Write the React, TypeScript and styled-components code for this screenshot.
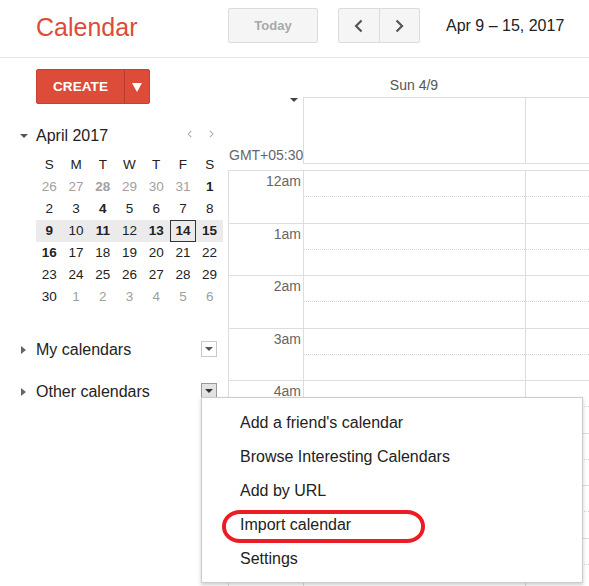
import React from 'react';
import styled, { createGlobalStyle } from 'styled-components';

const GlobalStyle = createGlobalStyle`
  html, body { margin: 0; padding: 0; background: #fff; }
  body { font-family: "Liberation Sans", Arial, sans-serif; color: #222; }
  * { box-sizing: border-box; }
  button { font-family: "Liberation Sans", Arial, sans-serif; cursor: default; }
`;

const Page = styled.div`
  position: relative;
  width: 589px;
  height: 586px;
  overflow: hidden;
  display: flex;
  flex-direction: column;
`;

/* ---------- header ---------- */
const Header = styled.header`
  flex: none;
  height: 58px;
  display: flex;
  align-items: flex-start;
  padding-top: 8px;
  border-bottom: 1px solid #e5e5e5;
`;

const Logo = styled.div`
  width: 228px;
  padding-left: 36px;
  margin-top: 2px;
  font-size: 25px;
  line-height: 35px;
  color: #dd4b39;
`;

const TodayButton = styled.button`
  width: 90px;
  height: 35px;
  padding: 0;
  background: #f5f5f5;
  border: 1px solid #dcdcdc;
  border-radius: 2px;
  font-size: 13px;
  font-weight: bold;
  color: #a9a9a9;
`;

const NavGroup = styled.div`
  display: flex;
  margin-left: 20px;
  width: 82px;
  height: 35px;
  border: 1px solid #dcdcdc;
  border-radius: 2px;
  background: #f5f5f5;
`;

const NavButton = styled.button<{ $divider?: boolean }>`
  width: 40px;
  height: 33px;
  padding: 0;
  border: 0;
  border-left: ${(p) => (p.$divider ? '1px solid #dcdcdc' : '0')};
  background: transparent;
  display: flex;
  align-items: center;
  justify-content: center;
`;

const DateRange = styled.div`
  margin-left: 26px;
  font-size: 16px;
  line-height: 35px;
  color: #222;
  white-space: nowrap;
`;

/* ---------- body ---------- */
const Body = styled.div`
  flex: 1;
  display: flex;
  min-height: 0;
  overflow: hidden;
`;

const Sidebar = styled.aside`
  flex: none;
  width: 228px;
  display: flex;
  flex-direction: column;
  & > * { flex: none; }
`;

const CreateButton = styled.div`
  margin: 11px 0 0 36px;
  width: 114px;
  height: 35px;
  display: flex;
  background: #dd4b39;
  border: 1px solid #c9402f;
  border-radius: 2px;
  color: #fff;
`;

const CreateLabel = styled.div`
  width: 87px;
  display: flex;
  align-items: center;
  justify-content: center;
  font-size: 13.5px;
  font-weight: bold;
  letter-spacing: 0.1px;
`;

const CreateArrow = styled.div`
  flex: 1;
  border-left: 1px solid #b83a2a;
  display: flex;
  align-items: center;
  justify-content: center;
`;

const WhiteTriangle = styled.span`
  width: 0;
  height: 0;
  border-left: 5px solid transparent;
  border-right: 5px solid transparent;
  border-top: 9px solid #fff;
  margin-top: 1px;
`;

const MiniHeader = styled.div`
  margin-top: 20px;
  height: 24px;
  display: flex;
  align-items: center;
  padding: 0 14px 0 20px;
`;

const DownTriangle = styled.span<{ $size?: number; $color?: string }>`
  width: 0;
  height: 0;
  border-left: ${(p) => p.$size ?? 4}px solid transparent;
  border-right: ${(p) => p.$size ?? 4}px solid transparent;
  border-top: ${(p) => p.$size ?? 4}px solid ${(p) => p.$color ?? '#555'};
`;

const RightTriangle = styled.span`
  width: 0;
  height: 0;
  border-top: 4px solid transparent;
  border-bottom: 4px solid transparent;
  border-left: 5px solid #666;
`;

const MonthTitle = styled.div`
  margin-left: 8px;
  font-size: 16px;
  line-height: 24px;
  color: #222;
`;

const MiniNav = styled.div`
  margin-left: auto;
  display: flex;
  gap: 17px;
  align-items: center;
  margin-top: -4px;
`;

const MiniGrid = styled.div`
  margin: 6px 0 0 36px;
  width: 187px;
`;

const WeekRow = styled.div<{ $highlight?: boolean }>`
  display: grid;
  grid-template-columns: repeat(7, 1fr);
  height: 22px;
  background: ${(p) => (p.$highlight ? '#ebebeb' : 'transparent')};
`;

const DayCell = styled.div<{ $other?: boolean; $bold?: boolean; $today?: boolean }>`
  text-align: center;
  font-size: 13.5px;
  line-height: ${(p) => (p.$today ? '20px' : '22px')};
  color: ${(p) => (p.$other ? '#a0a0a0' : '#222')};
  font-weight: ${(p) => (p.$bold ? 'bold' : 'normal')};
  border: ${(p) => (p.$today ? '1px solid #333' : '0')};
`;

const Sections = styled.div`
  margin-top: 21px;
  display: flex;
  flex-direction: column;
`;

const SectionRow = styled.div`
  height: 42px;
  display: flex;
  align-items: center;
  padding: 0 11px 0 21px;
`;

const SectionTitle = styled.div`
  margin-left: 10px;
  font-size: 16px;
  line-height: 42px;
  color: #222;
`;

const SmallDrop = styled.div<{ $active?: boolean }>`
  margin-left: auto;
  margin-top: -2px;
  width: 16px;
  height: 16px;
  border: 1px solid ${(p) => (p.$active ? '#999' : '#c8c8c8')};
  background: ${(p) => (p.$active ? '#e3e3e3' : '#fff')};
  display: flex;
  align-items: center;
  justify-content: center;
`;

/* ---------- main grid ---------- */
const Main = styled.main`
  flex: 1;
  display: flex;
  flex-direction: column;
  min-width: 0;
  & > * { flex: none; }
`;

const Columns = styled.div`
  display: grid;
  grid-template-columns: 75px 222px 1fr;
`;

const DayHeaderRow = styled(Columns)`
  height: 39px;
  align-items: end;
`;

const DayHeaderLabel = styled.div`
  grid-column: 2;
  text-align: center;
  font-size: 14px;
  line-height: 16px;
  padding-bottom: 4px;
  color: #555;
`;

const AllDayRow = styled(Columns)`
  height: 67px;
`;

const ZoneCell = styled.div`
  display: flex;
  flex-direction: column;
  justify-content: space-between;
  padding: 1px 0 1px 1px;
`;

const ZoneToggle = styled.div`
  align-self: flex-end;
  margin-right: 5px;
  display: flex;
`;

const ZoneLabel = styled.div`
  font-size: 14px;
  line-height: 16px;
  color: #666;
  white-space: nowrap;
`;

const AllDayCell = styled.div`
  border-top: 1px solid #ddd;
  border-bottom: 1px solid #ddd;
  border-left: 1px solid #ddd;
`;

const TimeGrid = styled.div`
  margin-top: 6px;
  display: flex;
  flex-direction: column;
`;

const HourRow = styled(Columns)`
  flex: none;
  height: 52.5px;
`;

const TimeLabel = styled.div`
  border-top: 1px solid #ddd;
  border-left: 1px solid #ddd;
  text-align: right;
  padding: 2px 2px 0 0;
  font-size: 14px;
  line-height: 16px;
  color: #666;
`;

const SlotCell = styled.div`
  border-top: 1px solid #ddd;
  border-left: 1px solid #ddd;
  padding-top: 25px;
`;

const HalfLine = styled.div`
  border-top: 1px dotted #d6d6d6;
`;

/* ---------- dropdown menu ---------- */
const Menu = styled.div`
  position: absolute;
  left: 201px;
  top: 397px;
  width: 382px;
  height: 186px;
  padding: 8px 0 6px;
  background: #fff;
  border: 1px solid #ccc;
  box-shadow: 0 2px 4px rgba(0, 0, 0, 0.2);
  z-index: 10;
`;

const MenuItem = styled.div`
  position: relative;
  height: 34px;
  padding-left: 38px;
  font-size: 16px;
  line-height: 34px;
  color: #222;
  white-space: nowrap;
`;

const Highlight = styled.span`
  position: absolute;
  left: 20px;
  top: 2px;
  width: 203px;
  height: 33px;
  border: 4px solid #ec1c24;
  border-radius: 18px / 16px;
  pointer-events: none;
`;

/* ---------- icons ---------- */
const Chevron = ({ dir, size = 14, color = '#555', width = 2.2 }: { dir: 'left' | 'right'; size?: number; color?: string; width?: number }) => (
  <svg width={size * 0.65} height={size} viewBox="0 0 9 14" fill="none">
    <polyline
      points={dir === 'left' ? '7.5,1.5 2,7 7.5,12.5' : '1.5,1.5 7,7 1.5,12.5'}
      stroke={color}
      strokeWidth={width}
      strokeLinejoin="miter"
    />
  </svg>
);

type Day = { n: number; other?: boolean; bold?: boolean; today?: boolean };

const weeks: Day[][] = [
  [{ n: 26, other: true }, { n: 27, other: true }, { n: 28, other: true, bold: true }, { n: 29, other: true }, { n: 30, other: true }, { n: 31, other: true }, { n: 1, bold: true }],
  [{ n: 2 }, { n: 3 }, { n: 4, bold: true }, { n: 5 }, { n: 6 }, { n: 7 }, { n: 8 }],
  [{ n: 9, bold: true }, { n: 10 }, { n: 11, bold: true }, { n: 12 }, { n: 13, bold: true }, { n: 14, bold: true, today: true }, { n: 15, bold: true }],
  [{ n: 16, bold: true }, { n: 17 }, { n: 18 }, { n: 19 }, { n: 20 }, { n: 21 }, { n: 22 }],
  [{ n: 23 }, { n: 24 }, { n: 25 }, { n: 26 }, { n: 27 }, { n: 28 }, { n: 29 }],
  [{ n: 30 }, { n: 1, other: true }, { n: 2, other: true }, { n: 3, other: true }, { n: 4, other: true }, { n: 5, other: true }, { n: 6, other: true }],
];

const weekdays = ['S', 'M', 'T', 'W', 'T', 'F', 'S'];
// labels of rows below 4am are hidden under the open menu
const hours = ['12am', '1am', '2am', '3am', '4am', '', '', ''];
const menuItems = ["Add a friend's calendar", 'Browse Interesting Calendars', 'Add by URL', 'Import calendar', 'Settings'];

export default function App() {
  return (
    <>
      <GlobalStyle />
      <Page>
        <Header>
          <Logo>Calendar</Logo>
          <TodayButton>Today</TodayButton>
          <NavGroup>
            <NavButton>
              <Chevron dir="left" />
            </NavButton>
            <NavButton $divider>
              <Chevron dir="right" />
            </NavButton>
          </NavGroup>
          <DateRange>Apr 9 – 15, 2017</DateRange>
        </Header>
        <Body>
          <Sidebar>
            <CreateButton>
              <CreateLabel>CREATE</CreateLabel>
              <CreateArrow>
                <WhiteTriangle />
              </CreateArrow>
            </CreateButton>
            <MiniHeader>
              <DownTriangle $size={4} $color="#555" />
              <MonthTitle>April 2017</MonthTitle>
              <MiniNav>
                <Chevron dir="left" size={8} color="#aaa" width={1.8} />
                <Chevron dir="right" size={8} color="#aaa" width={1.8} />
              </MiniNav>
            </MiniHeader>
            <MiniGrid>
              <WeekRow>
                {weekdays.map((d, i) => (
                  <DayCell key={i}>{d}</DayCell>
                ))}
              </WeekRow>
              {weeks.map((w, wi) => (
                <WeekRow key={wi} $highlight={wi === 2}>
                  {w.map((d, di) => (
                    <DayCell key={di} $other={d.other} $bold={d.bold} $today={d.today}>
                      {d.n}
                    </DayCell>
                  ))}
                </WeekRow>
              ))}
            </MiniGrid>
            <Sections>
              <SectionRow>
                <RightTriangle />
                <SectionTitle>My calendars</SectionTitle>
                <SmallDrop>
                  <DownTriangle $size={4} $color="#555" />
                </SmallDrop>
              </SectionRow>
              <SectionRow>
                <RightTriangle />
                <SectionTitle>Other calendars</SectionTitle>
                <SmallDrop $active>
                  <DownTriangle $size={4} $color="#333" />
                </SmallDrop>
              </SectionRow>
            </Sections>
          </Sidebar>
          <Main>
            <DayHeaderRow>
              <DayHeaderLabel>Sun 4/9</DayHeaderLabel>
            </DayHeaderRow>
            <AllDayRow>
              <ZoneCell>
                <ZoneToggle>
                  <DownTriangle $size={4} $color="#444" />
                </ZoneToggle>
                <ZoneLabel>GMT+05:30</ZoneLabel>
              </ZoneCell>
              <AllDayCell />
              <AllDayCell />
            </AllDayRow>
            <TimeGrid>
              {hours.map((h, i) => (
                <HourRow key={i}>
                  <TimeLabel>{h}</TimeLabel>
                  <SlotCell>
                    <HalfLine />
                  </SlotCell>
                  <SlotCell>
                    <HalfLine />
                  </SlotCell>
                </HourRow>
              ))}
            </TimeGrid>
          </Main>
        </Body>
        <Menu>
          {menuItems.map((m) => (
            <MenuItem key={m}>
              {m}
              {m === 'Import calendar' && <Highlight />}
            </MenuItem>
          ))}
        </Menu>
      </Page>
    </>
  );
}
